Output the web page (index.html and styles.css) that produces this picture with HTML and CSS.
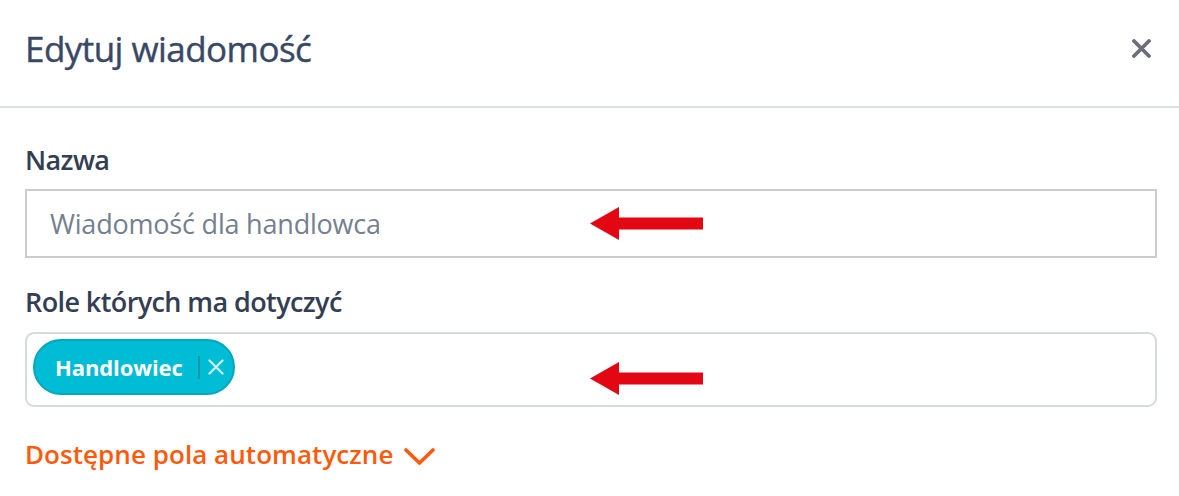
FILE: index.html
```html
<!DOCTYPE html>
<html lang="pl">
<head>
<meta charset="utf-8">
<title>Edytuj wiadomość</title>
<link rel="stylesheet" href="styles.css">
</head>
<body>
<div class="modal">
  <header class="modal-header">
    <h1 class="modal-title">Edytuj wiadomość</h1>
    <button class="close-btn" aria-label="Zamknij">
      <svg width="19" height="19" viewBox="0 0 19 19"><path d="M2 2 L17 17 M17 2 L2 17" stroke="#6c6f7a" stroke-width="3.8" stroke-linecap="round"/></svg>
    </button>
  </header>
  <div class="modal-body">
    <div class="field">
      <label class="field-label">Nazwa</label>
      <div class="input-wrap">
        <div class="text-input">Wiadomość dla handlowca</div>
        <svg class="arrow" width="113" height="33" viewBox="0 0 113 33"><polygon points="0,16.5 29,0 29,10.5 113,10.5 113,22.5 29,22.5 29,33" fill="#e30613"/></svg>
      </div>
    </div>
    <div class="field">
      <label class="field-label">Role których ma dotyczyć</label>
      <div class="input-wrap">
        <div class="tag-input">
          <span class="chip">
            <span class="chip-text">Handlowiec</span>
            <span class="chip-sep"></span>
            <svg class="chip-x" width="16" height="16" viewBox="0 0 16 16"><path d="M1.5 1.5 L14.5 14.5 M14.5 1.5 L1.5 14.5" stroke="#c4f1f6" stroke-width="2.4" stroke-linecap="round"/></svg>
          </span>
        </div>
        <svg class="arrow arrow-2" width="113" height="33" viewBox="0 0 113 33"><polygon points="0,16.5 29,0 29,10.5 113,10.5 113,22.5 29,22.5 29,33" fill="#e30613"/></svg>
      </div>
    </div>
    <a class="auto-fields" href="#">Dostępne pola automatyczne
      <svg width="31" height="17" viewBox="0 0 31 17"><path d="M2 2 L15.5 15 L29 2" fill="none" stroke="#ff5a0a" stroke-width="3.6" stroke-linecap="round" stroke-linejoin="round"/></svg>
    </a>
  </div>
</div>
</body>
</html>
```

FILE: styles.css
```css
html, body {
  margin: 0;
  padding: 0;
  background: #ffffff;
}
body {
  font-family: "Open Sans", "Noto Sans", "Liberation Sans", sans-serif;
  color: #37425a;
}
.modal {
  width: 1179px;
  height: 496px;
  overflow: hidden;
}
.modal-header {
  height: 106px;
  border-bottom: 2px solid #dcdfe3;
  display: flex;
  align-items: center;
  justify-content: space-between;
  padding: 0 28px 0 25px;
}
.modal-title {
  margin: 0;
  font-size: 35px;
  font-weight: 500;
  color: #384865;
  line-height: 40px;
  letter-spacing: -0.55px;
  padding-bottom: 9px;
  -webkit-text-stroke: 0.4px #384865;
}
.close-btn {
  border: 0;
  background: none;
  padding: 0;
  margin: 0;
  width: 19px;
  height: 19px;
  display: flex;
  margin-bottom: 10px;
}
.modal-body {
  padding: 0 22px 0 25px;
}
.field-label {
  display: block;
  font-size: 27px;
  font-weight: 600;
  line-height: 36px;
  letter-spacing: -0.6px;
  color: #343e52;
}
.field:first-child .field-label {
  margin-top: 34px;
  margin-bottom: 11px;
}
.field:nth-child(2) .field-label {
  margin-top: 26px;
  margin-bottom: 12px;
}
.input-wrap {
  position: relative;
}
.text-input {
  box-sizing: border-box;
  height: 69px;
  border: 2px solid #cccccc;
  padding: 0 23px;
  display: flex;
  align-items: center;
  font-size: 27px;
  color: #75808f;
  letter-spacing: -0.2px;
}
.tag-input {
  box-sizing: border-box;
  height: 75px;
  border: 2px solid #d6d9de;
  border-radius: 9px;
  padding: 5px 6px 9px;
  display: flex;
  align-items: flex-start;
}
.chip {
  box-sizing: border-box;
  height: 56px;
  width: 202px;
  border-radius: 28px;
  background: #00bcd4;
  border: 2px solid #00a8be;
  display: flex;
  align-items: center;
  padding: 0 0 0 20px;
}
.chip-text {
  font-size: 22px;
  font-weight: 700;
  color: #ffffff;
  letter-spacing: -0.1px;
}
.chip-sep {
  width: 2px;
  height: 23px;
  background: #0398ab;
  margin-left: 15px;
  margin-right: 8px;
}
.chip-x {
  display: block;
}
.arrow {
  position: absolute;
  left: 565px;
  top: 18px;
}
.arrow-2 {
  top: 30px;
}
.auto-fields {
  display: inline-flex;
  align-items: center;
  gap: 11px;
  margin-top: 30px;
  font-size: 26px;
  font-weight: 600;
  color: #ff5a0a;
  text-decoration: none;
  letter-spacing: 0.05px;
  line-height: 34px;
}
.auto-fields svg {
  display: block;
  margin-top: 4px;
}
```
